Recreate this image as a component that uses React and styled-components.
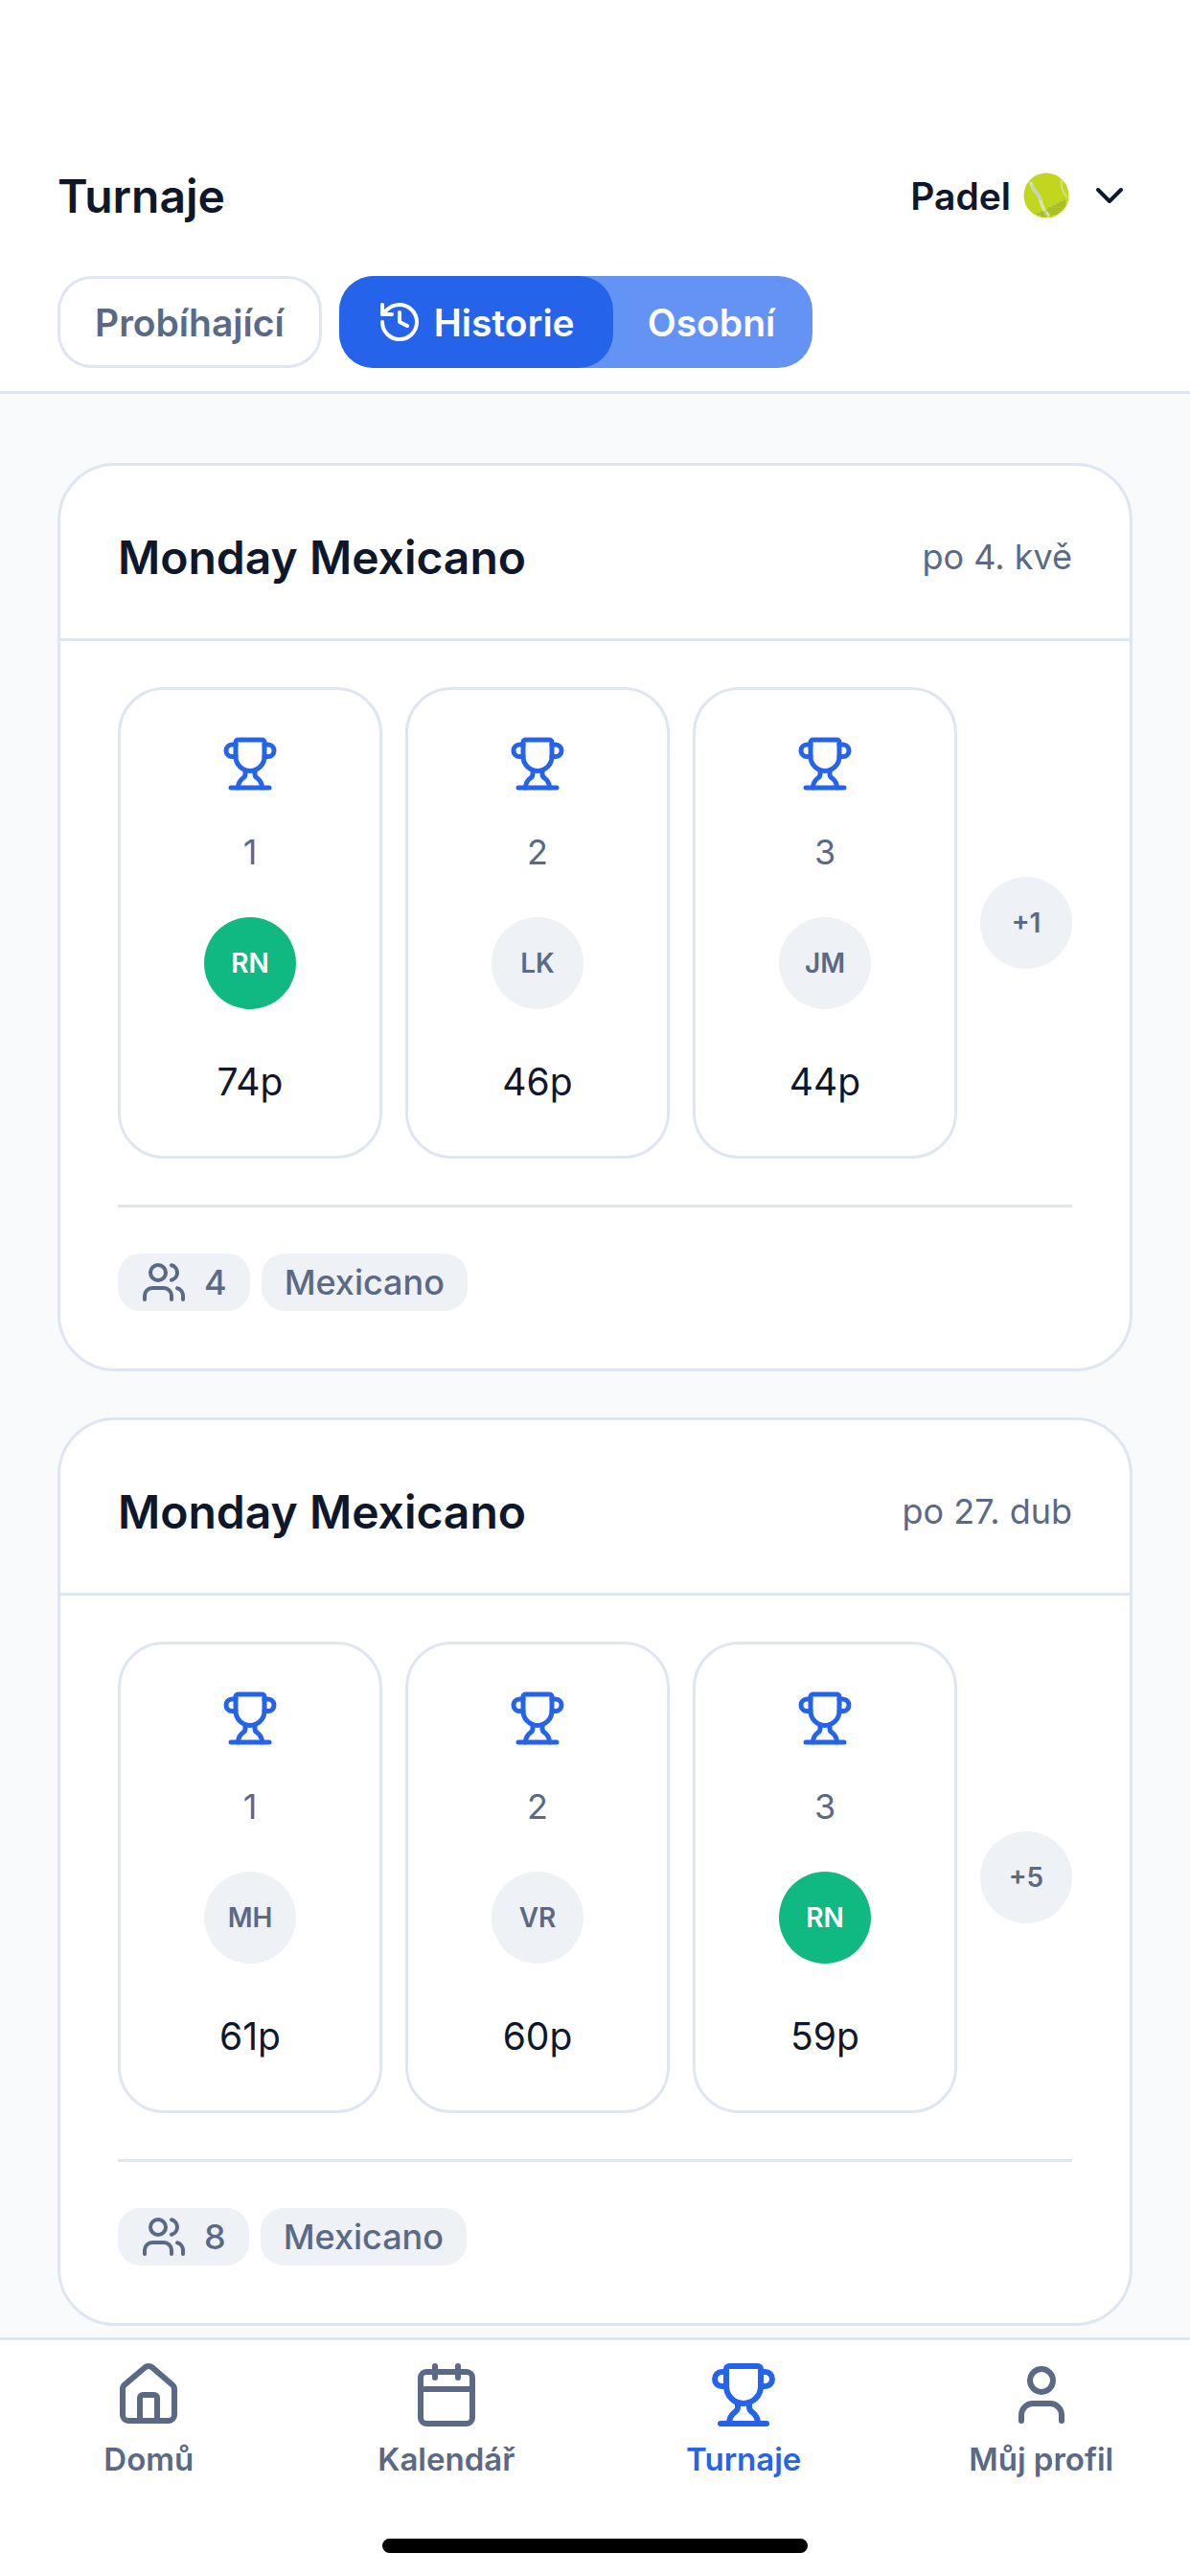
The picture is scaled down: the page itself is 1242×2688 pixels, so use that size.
import React from 'react';
import styled, { createGlobalStyle } from 'styled-components';
import { ChevronDown, History, Trophy, Users, House, Calendar, User } from 'lucide-react';

const slate = { line: '#dfe6f1', soft: '#eef1f6', page: '#f8fafc', text: '#5a6985', dark: '#0f172a' };
const blue = '#2563eb';

const GlobalStyle = createGlobalStyle`
  html, body { margin: 0; padding: 0; background: #fff; }
  * { box-sizing: border-box; }
  body { font-family: Inter, "Noto Sans", "Liberation Sans", sans-serif; }
`;

const Screen = styled.div`
  width: 1242px;
  height: 2688px;
  display: flex;
  flex-direction: column;
  background: #fff;
  overflow: hidden;
`;

const TopBar = styled.header`
  flex: none;
  padding: 150px 60px 24px 60px;
  border-bottom: 3px solid ${slate.line};
`;

const TitleRow = styled.div`
  display: flex;
  align-items: center;
  justify-content: space-between;
  height: 108px;
  margin-bottom: 30px;
`;

const Title = styled.h1`
  margin: 0;
  font-size: 48px;
  font-weight: 600;
  color: ${slate.dark};
`;

const SportPicker = styled.div`
  display: flex;
  align-items: center;
  font-size: 39px;
  font-weight: 600;
  color: ${slate.dark};
  svg.chevron { margin-left: 18px; }
`;

const TabRow = styled.div`
  display: flex;
  gap: 18px;
`;

const TabGroup = styled.div`
  display: flex;
  border-radius: 36px;
  background: #6393f5;
`;

const Tab = styled.div`
  height: 96px;
  display: flex;
  align-items: center;
  gap: 12px;
  padding: ${p => p.$pad};
  border-radius: 36px;
  font-size: 39px;
  font-weight: 600;
  color: ${p => (p.$variant === 'outline' ? slate.text : '#fff')};
  background: ${p => (p.$variant === 'active' ? blue : 'transparent')};
  border: ${p => (p.$variant === 'outline' ? `3px solid ${slate.line}` : 'none')};
`;

const Feed = styled.main`
  flex: 1;
  min-height: 0;
  overflow: hidden;
  display: flex;
  flex-direction: column;
  gap: 48px;
  padding: 72px 60px 0;
  background: ${slate.page};
`;

const Card = styled.article`
  flex: none;
  background: #fff;
  border: 3px solid ${slate.line};
  border-radius: 60px;
`;

const CardHead = styled.div`
  height: 183px;
  padding: 10px 60px 0;
  display: flex;
  align-items: center;
  justify-content: space-between;
  border-bottom: 3px solid ${slate.line};
`;

const CardTitle = styled.h2`
  margin: 0;
  font-size: 48px;
  font-weight: 600;
  color: ${slate.dark};
`;

const CardDate = styled.span`
  font-size: 36px;
  color: ${slate.text};
`;

const CardBody = styled.div`
  padding: 48px 60px 60px;
`;

const Podium = styled.div`
  display: flex;
  align-items: center;
  gap: 24px;
  padding-bottom: 48px;
  border-bottom: 3px solid ${slate.line};
`;

const Place = styled.div`
  width: 276px;
  height: 492px;
  border: 3px solid ${slate.line};
  border-radius: 48px;
  display: flex;
  flex-direction: column;
  align-items: center;
  padding-top: 47px;
`;

const Rank = styled.div`
  margin-top: 35px;
  height: 54px;
  line-height: 54px;
  font-size: 36px;
  color: ${slate.text};
`;

const Avatar = styled.div`
  width: 96px;
  height: 96px;
  margin-top: 41px;
  border-radius: 50%;
  display: flex;
  align-items: center;
  justify-content: center;
  font-size: 28px;
  font-weight: 600;
  color: ${p => (p.$me ? '#fff' : slate.text)};
  background: ${p => (p.$me ? '#10b981' : slate.soft)};
`;

const Score = styled.div`
  margin-top: 49px;
  height: 54px;
  line-height: 54px;
  font-size: 39px;
  color: ${slate.dark};
`;

const More = styled(Avatar)`
  margin: 0;
`;

const Chips = styled.div`
  display: flex;
  gap: 12px;
  padding-top: 48px;
`;

const Chip = styled.div`
  height: 60px;
  display: flex;
  align-items: center;
  gap: 18px;
  padding: 0 24px;
  border-radius: 24px;
  background: ${slate.soft};
  font-size: 36px;
  font-weight: 500;
  color: ${slate.text};
`;

const BottomNav = styled.nav`
  flex: none;
  height: 249px;
  background: #fff;
  border-top: 3px solid ${slate.line};
  display: grid;
  grid-template-columns: repeat(4, 1fr);
  padding: 21px 0 0;
  position: relative;
`;

const NavItem = styled.div`
  display: flex;
  flex-direction: column;
  align-items: center;
  gap: 11px;
  font-size: 33px;
  font-weight: 600;
  color: ${p => (p.$active ? blue : slate.text)};
`;

const HomeBar = styled.div`
  position: absolute;
  left: 399px;
  bottom: 24px;
  width: 444px;
  height: 15px;
  border-radius: 8px;
  background: #000;
`;

// lime ball with a pale seam and a dotted shadow along the lower right
function TennisBall() {
  const dots = [];
  for (let x = 13; x <= 44; x += 2) {
    for (let y = 29; y <= 47; y += 2) {
      const belowEdge = y > 43 - (x - 13) * 0.48;
      const inBall = (x - 24) ** 2 + (y - 24) ** 2 < 22 ** 2;
      const onSeam = Math.abs(x - (18 + (y - 29) * 0.55)) < 1.5;
      if (belowEdge && inBall && !onSeam) {
        dots.push(<circle key={`${x}-${y}`} cx={x} cy={y} r="0.6" fill="#5c6a5e" />);
      }
    }
  }
  return (
    <svg width="48" height="48" viewBox="0 0 48 48" style={{ marginLeft: 13 }}>
      <circle cx="24" cy="24" r="23.5" fill="#c1d61f" />
      <path d="M40 8c-1 7 1 13 6 18" fill="none" stroke="#d6e37a" strokeWidth="2" />
      <path d="M8 10c1 8 8 11 10 19 1.500 6 4 12 9 17" fill="none" stroke="#dbe6a0" strokeWidth="3.500" />
      <path d="M9 13c2 6 7 9 9.500 16" fill="none" stroke="#c9ccd8" strokeWidth="2.500" />
      {dots}
    </svg>
  );
}

const tournaments = [
  {
    date: 'po 4. kvě',
    places: [['RN', '74p', true], ['LK', '46p'], ['JM', '44p']],
    more: '+1',
    players: 4,
  },
  {
    date: 'po 27. dub',
    places: [['MH', '61p'], ['VR', '60p'], ['RN', '59p', true]],
    more: '+5',
    players: 8,
  },
];

const navItems = [
  ['Domů', House],
  ['Kalendář', Calendar],
  ['Turnaje', Trophy, true],
  ['Můj profil', User],
];

export default function App() {
  return (
    <Screen>
      <GlobalStyle />
      <TopBar>
        <TitleRow>
          <Title>Turnaje</Title>
          <SportPicker>
            Padel
            <TennisBall />
            <ChevronDown className="chevron" size={48} strokeWidth={2} />
          </SportPicker>
        </TitleRow>
        <TabRow>
          <Tab $variant="outline" $pad="0 36px">Probíhající</Tab>
          <TabGroup>
            <Tab $variant="active" $pad="0 40px 0 39px"><History size={48} strokeWidth={2} />Historie</Tab>
            <Tab $pad="0 39px 0 36px">Osobní</Tab>
          </TabGroup>
        </TabRow>
      </TopBar>
      <Feed>
        {tournaments.map(t => (
          <Card key={t.date}>
            <CardHead>
              <CardTitle>Monday Mexicano</CardTitle>
              <CardDate>{t.date}</CardDate>
            </CardHead>
            <CardBody>
              <Podium>
                {t.places.map(([name, score, me], i) => (
                  <Place key={name}>
                    <Trophy size={60} color={blue} strokeWidth={2} />
                    <Rank>{i + 1}</Rank>
                    <Avatar $me={me}>{name}</Avatar>
                    <Score>{score}</Score>
                  </Place>
                ))}
                <More>{t.more}</More>
              </Podium>
              <Chips>
                <Chip><Users size={48} strokeWidth={2} />{t.players}</Chip>
                <Chip>Mexicano</Chip>
              </Chips>
            </CardBody>
          </Card>
        ))}
      </Feed>
      <BottomNav>
        {navItems.map(([label, Icon, active]) => (
          <NavItem key={label} $active={active}>
            <Icon size={72} strokeWidth={2} />
            {label}
          </NavItem>
        ))}
        <HomeBar />
      </BottomNav>
    </Screen>
  );
}
